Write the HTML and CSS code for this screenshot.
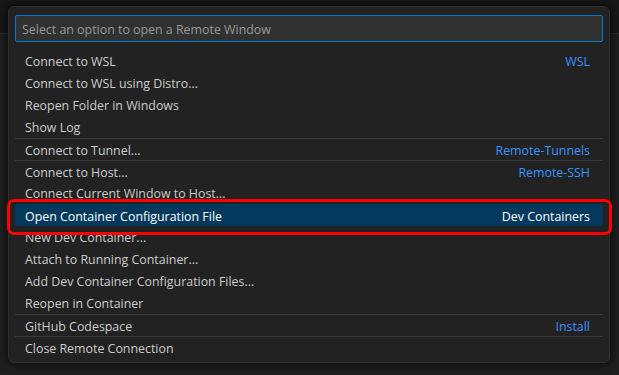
FILE: index.html
```html
<!DOCTYPE html>
<html>
<head>
    <title>Remote Window</title>
    <link rel="stylesheet" href="styles.css">
</head>
<body>

    <!-- Editor behind the picker -->
    <div class="workbench">
        <div class="titlebar"></div>
        <div class="editor"></div>

        <!-- Quick pick widget -->
        <div class="quick-input">
            <div class="input-box">
                <input type="text" placeholder="Select an option to open a Remote Window">
            </div>
            <div class="list">
                <div class="row"><span class="label">Connect to WSL</span><span class="desc">WSL</span></div>
                <div class="row"><span class="label">Connect to WSL using Distro...</span></div>
                <div class="row"><span class="label">Reopen Folder in Windows</span></div>
                <div class="row"><span class="label">Show Log</span></div>
                <div class="row group"><span class="label">Connect to Tunnel...</span><span class="desc">Remote-Tunnels</span></div>
                <div class="row group"><span class="label">Connect to Host...</span><span class="desc">Remote-SSH</span></div>
                <div class="row"><span class="label">Connect Current Window to Host...</span></div>
                <div class="row group focused"><span class="label">Open Container Configuration File</span><span class="desc">Dev Containers</span></div>
                <div class="row"><span class="label">New Dev Container...</span></div>
                <div class="row"><span class="label">Attach to Running Container...</span></div>
                <div class="row"><span class="label">Add Dev Container Configuration Files...</span></div>
                <div class="row"><span class="label">Reopen in Container</span></div>
                <div class="row group"><span class="label">GitHub Codespace</span><span class="desc">Install</span></div>
                <div class="row group"><span class="label">Close Remote Connection</span></div>
            </div>
        </div>

        <!-- Annotation around the selected item -->
        <div class="callout"></div>
    </div>

</body>
</html>
```

FILE: styles.css
```css
/* General Body Styles */
* {
    box-sizing: border-box;
}

body {
    margin: 0;
    padding: 0;
    font-family: 'Open Sans', 'Noto Sans', sans-serif;
    font-size: 12.4px;
    background-color: #1f1f1f;
    color: #cccccc;
}

.workbench {
    position: relative;
    width: 619px;
    height: 375px;
    overflow: hidden;
    display: flex;
    flex-direction: column;
}

.titlebar {
    height: 34px;
    background-color: #181818;
    border-bottom: 1px solid #2b2b2b;
}

.editor {
    flex: 1;
    background-color: #1f1f1f;
}

/* Quick Pick */
.quick-input {
    position: absolute;
    left: 8px;
    top: 6px;
    width: 602px;
    height: 357px;
    background-color: #222222;
    border: 1px solid #2e2e2e;
    border-radius: 6px;
    box-shadow: 0 0 8px 2px rgba(0, 0, 0, 0.6);
    padding: 8px 6px 4px;
}

.input-box input {
    display: block;
    width: 100%;
    height: 27px;
    margin: 0;
    padding: 1px 6px 0;
    background-color: #313131;
    border: 1px solid #0078d4;
    border-radius: 2px;
    color: #cccccc;
    font-family: inherit;
    font-size: 12.4px;
    outline: none;
}

.input-box input::placeholder {
    color: #989898;
}

.list {
    margin-top: 8px;
}

.row {
    display: flex;
    justify-content: space-between;
    align-items: center;
    height: 22px;
    padding: 1px 13px 0 10px;
    white-space: nowrap;
}

.row.group {
    border-top: 1px solid #3a3a3a;
}

.row .desc {
    color: #3794ff;
}

.row.focused {
    background-color: #04395e;
    border-top-color: #04395e;
    border-radius: 3px;
    color: #ffffff;
}

.row.focused .desc {
    color: #ffffff;
}

/* Red annotation box */
.callout {
    position: absolute;
    left: 7px;
    top: 199px;
    width: 605px;
    height: 36px;
    border: 3px solid #ff0000;
    border-radius: 7px;
}
```
